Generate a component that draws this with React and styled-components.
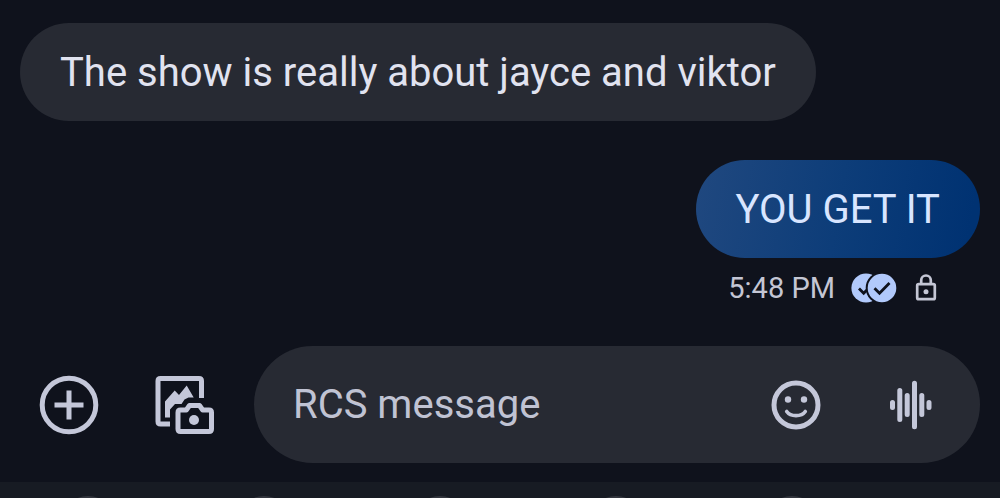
import React from "react";
import styled, { createGlobalStyle } from "styled-components";

const GlobalStyle = createGlobalStyle`
  * { box-sizing: border-box; }
  body {
    margin: 0;
    background: #0f121c;
    font-family: Roboto, "Open Sans", sans-serif;
  }
`;

const Page = styled.div`
  display: flex;
  flex-direction: column;
  height: 100vh;
  overflow: hidden;
`;

const Thread = styled.main`
  display: flex;
  flex-direction: column;
  gap: 39px;
  padding: 23px 20px 0;
`;

const Message = styled.article`
  display: flex;
  flex-direction: column;
  align-items: ${(p) => (p.$sent ? "flex-end" : "flex-start")};
`;

const Bubble = styled.p`
  margin: 0;
  padding: 26px 40px 24px;
  border-radius: 49px;
  font-size: 40px;
  line-height: 48px;
  color: ${(p) => (p.$sent ? "#d8e5ff" : "#e1e3f0")};
  background: ${(p) =>
    p.$sent ? "linear-gradient(100deg, #20487f 0%, #0d3d79 50%, #003272 95%)" : "#272a33"};
`;

const Meta = styled.div`
  display: flex;
  align-items: center;
  gap: 16px;
  height: 32px;
  margin-top: 14px;
  padding-right: 41px;
  color: #c4c6d4;
`;

const Time = styled.time`
  font-size: 29px;
  line-height: 32px;
`;

const Composer = styled.form`
  display: flex;
  align-items: center;
  gap: 39px;
  padding: 42px 20px 19px;
`;

const Actions = styled.div`
  display: flex;
  gap: 56px;
  padding-left: 19px;
`;

const IconButton = styled.button`
  display: flex;
  padding: 0;
  border: 0;
  background: none;
  color: #c4c7d9;
  cursor: pointer;
`;

const Field = styled.div`
  display: flex;
  flex: 1;
  align-items: center;
  gap: 68px;
  min-width: 0;
  height: 117px;
  padding: 0 47px 0 39px;
  border-radius: 59px;
  background: #272a33;
`;

const TextInput = styled.input`
  flex: 1;
  min-width: 0;
  padding: 0;
  border: 0;
  outline: 0;
  background: none;
  color: #e1e3f0;
  font: 40px/48px Roboto, "Open Sans", sans-serif;
  &::placeholder { color: #c0c3d3; opacity: 1; }
`;

const Keyboard = styled.footer`
  display: grid;
  flex: 1;
  grid-template-columns: repeat(5, 17.6%);
  justify-items: center;
  min-height: 16px;
  padding-top: 14px;
  overflow: hidden;
  background: #171b23;
`;

const Key = styled.span`
  width: 56px;
  height: 56px;
  border-radius: 50%;
  background: #34373f;
`;

const PlusIcon = () => (
  <svg width="60" height="60" viewBox="0 0 60 60" fill="none" stroke="currentColor" strokeWidth="5" aria-hidden="true">
    <circle cx="30" cy="30" r="26.8" />
    <path d="M30 15.5v29M15.5 30h29" />
  </svg>
);

const GalleryIcon = () => (
  <svg width="60" height="60" viewBox="0 0 60 60" fill="none" stroke="currentColor" strokeWidth="5" aria-hidden="true">
    <path d="M46.5 23V6Q46.5 3.5 44 3.5H5.5Q3 3.5 3 6V46.5Q3 49 5.5 49H15" />
    <path d="M10 26.5L19.7 15.5L24 20L31.7 10.5L38.7 22.5H33.5L29.5 24.5L26.5 29H20L15 34.5V42.5H10Z" fill="currentColor" stroke="none" />
    <path d="M25.5 35H31.3L34.5 30.5H44.5L47.7 35H54Q56.5 35 56.5 37.5V54Q56.5 56.5 54 56.5H25.5Q23 56.5 23 54V37.5Q23 35 25.5 35Z" strokeLinejoin="round" />
    <circle cx="39" cy="45" r="5" fill="currentColor" stroke="none" />
  </svg>
);

const SmileIcon = () => (
  <svg width="50" height="50" viewBox="0 0 50 50" fill="none" stroke="currentColor" aria-hidden="true">
    <circle cx="25" cy="25" r="22" strokeWidth="5" />
    <circle cx="17" cy="19.5" r="3.2" fill="currentColor" stroke="none" />
    <circle cx="33" cy="19.5" r="3.2" fill="currentColor" stroke="none" />
    <path d="M15.7 31.5C19.5 37 30.5 37 34.3 31.5" strokeWidth="3.6" strokeLinecap="round" />
  </svg>
);

const VoiceIcon = () => (
  <svg width="44" height="50" viewBox="0 0 44 50" stroke="currentColor" strokeWidth="5" strokeLinecap="round" aria-hidden="true">
    <path d="M3.5 22.5v5M10.8 10.5v29M18.2 15.5v19M25.5 3.2v43.6M32.8 15.5v19M40 22.5v5" />
  </svg>
);

const ReadIcon = () => (
  <svg width="46" height="32" viewBox="0 0 46 32" fill="none" stroke="#0f121c" role="img" aria-label="Read">
    <circle cx="15" cy="16" r="14.6" fill="#b1c9fb" stroke="none" />
    <path d="M8 16.5l4.7 4.7L22 11.8" strokeWidth="2.8" />
    <circle cx="31" cy="16" r="15.3" fill="#b1c9fb" strokeWidth="2" />
    <path d="M23.5 16.2l5 5L38.5 11" strokeWidth="2.8" />
  </svg>
);

const LockIcon = () => (
  <svg width="26" height="32" viewBox="0 0 26 32" fill="none" stroke="currentColor" strokeWidth="2.7" role="img" aria-label="Encrypted">
    <rect x="4.2" y="12.2" width="17.6" height="15" rx="1.5" />
    <path d="M8.2 12V8.3a4.8 4.8 0 0 1 9.6 0V12" />
    <circle cx="13" cy="19.7" r="2.5" fill="currentColor" stroke="none" />
  </svg>
);

const KEYS = ["a", "b", "c", "d", "e"];

export default function App() {
  return (
    <Page>
      <GlobalStyle />
      <Thread>
        <Message>
          <Bubble>The show is really about jayce and viktor</Bubble>
        </Message>
        <Message $sent>
          <Bubble $sent>YOU GET IT</Bubble>
          <Meta>
            <Time>5:48 PM</Time>
            <ReadIcon />
            <LockIcon />
          </Meta>
        </Message>
      </Thread>
      <Composer onSubmit={(e) => e.preventDefault()}>
        <Actions>
          <IconButton type="button" aria-label="Add attachment"><PlusIcon /></IconButton>
          <IconButton type="button" aria-label="Gallery and camera"><GalleryIcon /></IconButton>
        </Actions>
        <Field>
          <TextInput type="text" placeholder="RCS message" aria-label="RCS message" />
          <IconButton type="button" aria-label="Emoji"><SmileIcon /></IconButton>
          <IconButton type="button" aria-label="Voice message"><VoiceIcon /></IconButton>
        </Field>
      </Composer>
      <Keyboard aria-hidden="true">
        {KEYS.map((key) => <Key key={key} />)}
      </Keyboard>
    </Page>
  );
}
